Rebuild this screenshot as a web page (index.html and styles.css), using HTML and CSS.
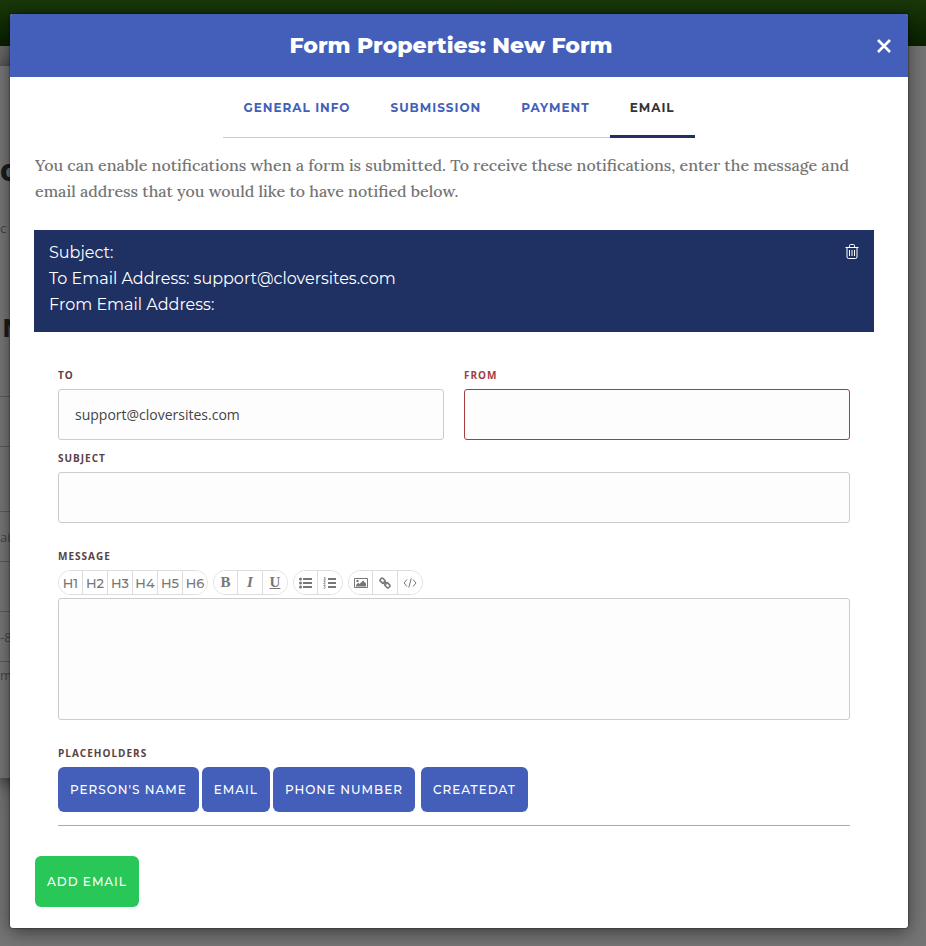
FILE: index.html
```html
<!DOCTYPE html>
<html lang="en">
<head>
  <meta charset="UTF-8">
  <meta name="viewport" content="width=device-width, initial-scale=1.0">
  <title>Form Properties</title>
  <link rel="stylesheet" href="styles.css">
</head>
<body>

<!-- Page behind the modal -->
<div class="page" aria-hidden="true">
  <div class="page-header"></div>
  <div class="page-toolbar"></div>
  <div class="page-card">
    <div class="page-title">o</div>
    <div class="page-text">c</div>
    <div class="page-heading">N</div>
    <div class="page-row"></div>
    <div class="page-row gap"></div>
    <div class="page-row">ai</div>
    <div class="page-row"></div>
    <div class="page-row">-8</div>
    <div class="page-row last">m</div>
  </div>
</div>

<!-- Modal -->
<div class="overlay">
  <div class="modal" role="dialog" aria-labelledby="modalTitle">
    <div class="modal-header">
      <h1 id="modalTitle">Form Properties: New Form</h1>
      <button type="button" class="close-button" aria-label="Close">
        <svg width="16" height="16" viewBox="0 0 16 16"><path d="M2 2l12 12M14 2L2 14" stroke="#fff" stroke-width="2.600" fill="none"/></svg>
      </button>
    </div>

    <div class="modal-body">
      <nav class="tabs">
        <a href="#general">General Info</a>
        <a href="#submission">Submission</a>
        <a href="#payment">Payment</a>
        <a href="#email" class="active">Email</a>
      </nav>

      <div class="content">
        <p class="intro">You can enable notifications when a form is submitted. To receive these notifications, enter the message and email address that you would like to have notified below.</p>

        <div class="summary">
          <div>
            <div>Subject:</div>
            <div>To Email Address: support@cloversites.com</div>
            <div>From Email Address:</div>
          </div>
          <button type="button" class="delete-button" aria-label="Delete">
            <svg width="14" height="15" viewBox="0 0 14 15" fill="none" stroke="#fff"><path d="M0.5 3.5h13M4.5 3V1.5q0-1 1-1h3q1 0 1 1V3M2 4v9q0 1.500 1.500 1.500h7q1.500 0 1.500-1.500V4M4.500 6v6M7 6v6M9.500 6v6"/></svg>
          </button>
        </div>

        <form class="email-form">
          <div class="row">
            <div class="field">
              <label for="to">To</label>
              <input type="text" id="to" value="support@cloversites.com">
            </div>
            <div class="field error">
              <label for="from">From</label>
              <input type="text" id="from">
            </div>
          </div>

          <div class="field subject">
            <label for="subject">Subject</label>
            <input type="text" id="subject">
          </div>

          <div class="field message">
            <label for="message">Message</label>
            <div class="toolbar">
              <div class="group">
                <button type="button">H1</button>
                <button type="button">H2</button>
                <button type="button">H3</button>
                <button type="button">H4</button>
                <button type="button">H5</button>
                <button type="button">H6</button>
              </div>
              <div class="group serif">
                <button type="button"><b>B</b></button>
                <button type="button"><i>I</i></button>
                <button type="button"><u>U</u></button>
              </div>
              <div class="group">
                <button type="button" aria-label="Bulleted list">
                  <svg width="14" height="12" viewBox="0 0 14 12" fill="#777"><circle cx="1.500" cy="2" r="1.500"/><circle cx="1.500" cy="6" r="1.500"/><circle cx="1.500" cy="10" r="1.500"/><path d="M4 1h9v2H4zM4 5h9v2H4zM4 9h9v2H4z"/></svg>
                </button>
                <button type="button" aria-label="Numbered list">
                  <svg width="14" height="12" viewBox="0 0 14 12" fill="#777"><path d="M5 1h8v2H5zM5 5h8v2H5zM5 9h8v2H5z"/><path d="M1 .5h1V3M.7 3.200h1.800M.6 4.700q1.800-.6 1.600.4L.7 6.900h1.800M.6 8.500h1.700L1.500 9.600q1 .2.700 1.200-.6.900-1.700.3" fill="none" stroke="#777" stroke-width=".8"/></svg>
                </button>
              </div>
              <div class="group">
                <button type="button" aria-label="Image">
                  <svg width="14" height="12" viewBox="0 0 14 12" fill="#777"><path d="M.5 1.500h13v9H.5z" fill="none" stroke="#777"/><circle cx="3.500" cy="4" r="1.200"/><path d="M2 9.500V8l2.300-2.200L5.500 7 9 3.500 12 6.500v3z"/></svg>
                </button>
                <button type="button" aria-label="Link">
                  <svg width="12" height="12" viewBox="0 0 12 12" fill="none" stroke="#777" stroke-width="1.600"><rect x="1" y="1.800" width="5.200" height="3.800" rx="1.700" transform="rotate(45 3.600 3.700)"/><rect x="5.800" y="6.400" width="5.200" height="3.800" rx="1.700" transform="rotate(45 8.400 8.300)"/><path d="M4.500 4.500l3 3"/></svg>
                </button>
                <button type="button" aria-label="Code">
                  <svg width="14" height="10" viewBox="0 0 14 10" fill="none" stroke="#777"><path d="M4 1.500L1 5l3 3.500M10 1.500L13 5l-3 3.500M8.200.5L5.800 9.500"/></svg>
                </button>
              </div>
            </div>
            <textarea id="message"></textarea>
          </div>

          <div class="field placeholders">
            <span class="label">Placeholders</span>
            <div class="placeholder-buttons">
              <button type="button">Person's Name</button>
              <button type="button">Email</button>
              <button type="button">Phone Number</button>
              <button type="button" class="created">CreatedAt</button>
            </div>
          </div>
        </form>

        <button type="button" class="add-button">Add Email</button>
      </div>
    </div>
  </div>
</div>

</body>
</html>
```
FILE: styles.css
```css
* {
  box-sizing: border-box;
}

body {
  margin: 0;
  background-color: #757575;
  font-family: Montserrat, Inter, sans-serif;
}

button {
  font-family: inherit;
  cursor: pointer;
}

/* Page behind the modal */
.page {
  position: absolute;
  inset: 0;
  overflow: hidden;
  color: #454545;
  font: 13px/20px "Open Sans", sans-serif;
}

.page-header {
  height: 46px;
  background: linear-gradient(#193809, #0a2000);
}

.page-toolbar {
  width: 300px;
  height: 20px;
  background-color: #6b6b6b;
}

.page-card {
  width: 300px;
  height: 712px;
  background-color: #777;
  box-shadow: 0 2px 20px rgba(0, 0, 0, 0.8);
}

.page-title {
  padding-top: 84px;
  font: 800 30px/40px Inter, sans-serif;
  color: #1c1c1c;
}

.page-text {
  padding-top: 28px;
}

.page-heading {
  padding: 74px 0 50px 3px;
  font: 800 24px/34px Inter, sans-serif;
  color: #1c1c1c;
}

.page-row {
  height: 50px;
  padding-top: 15px;
  border-top: 1px solid #5c5c5c;
}

.page-row.gap {
  height: 65px;
}

.page-row.last {
  padding-top: 3px;
}

/* Modal */
.overlay {
  position: relative;
  padding: 14px 18px 18px 10px;
}

.modal {
  background-color: #fff;
  border-radius: 3px;
  box-shadow: 0 0 2px rgba(0, 0, 0, 0.8), 0 4px 18px rgba(0, 0, 0, 0.5);
}

.modal-header {
  display: flex;
  align-items: center;
  height: 63px;
  padding: 0 16px;
  background-color: #445fb9;
  border-radius: 3px 3px 0 0;
}

.modal-header h1 {
  flex: 1;
  margin: 0;
  color: #fff;
  font-size: 22px;
  line-height: 30px;
  font-weight: 800;
  text-align: center;
}

.close-button {
  display: flex;
  padding: 0;
  border: none;
  background: none;
}

.modal-body {
  padding: 0 24px 21px;
}

.content {
  padding-right: 10px;
}

.tabs {
  display: flex;
  width: fit-content;
  margin: 0 auto;
  border-bottom: 1px solid #ccc;
}

.tabs a {
  padding: 21px 20px 0;
  margin-bottom: -1px;
  height: 61px;
  color: #445fb9;
  font-size: 12px;
  line-height: 20px;
  font-weight: 700;
  letter-spacing: 1px;
  text-transform: uppercase;
  text-decoration: none;
}

.tabs a.active {
  color: #333;
  border-bottom: 3px solid #1f3063;
}

.intro {
  margin: 14px 0 26px;
  padding-left: 1px;
  color: #757575;
  font-family: Lora, "Liberation Serif", serif;
  font-size: 16px;
  line-height: 26px;
  font-weight: 500;
}

.summary {
  display: flex;
  justify-content: space-between;
  align-items: flex-start;
  padding: 10px 15px 14px;
  background-color: #1f3063;
  color: #fff;
  font-size: 16px;
  line-height: 26px;
}

.delete-button {
  display: flex;
  padding: 4px 0 0;
  border: none;
  background: none;
}

.email-form {
  margin: 36px 24px 30px;
  padding-bottom: 13px;
  border-bottom: 1px solid #aaa;
}

.row {
  display: grid;
  grid-template-columns: 1fr 1fr;
  gap: 20px;
}

.field label,
.field .label {
  display: block;
  margin-bottom: 7px;
  color: #5b4242;
  font-family: "Open Sans", sans-serif;
  font-size: 10px;
  line-height: 14px;
  font-weight: 700;
  letter-spacing: 1px;
  text-transform: uppercase;
}

.field input,
.field textarea {
  display: block;
  width: 100%;
  padding: 0 16px;
  border: 1px solid #ccc;
  border-radius: 3px;
  background-color: #fdfdfd;
  color: #444;
  font-family: "Open Sans", sans-serif;
  font-size: 14px;
}

.field input {
  height: 51px;
}

.field textarea {
  height: 122px;
  padding: 12px 16px;
  resize: none;
}

.field.error label {
  color: #a33d42;
}

.field.error input {
  border-color: #a33d42;
}

.subject {
  margin-top: 11px;
}

.message {
  margin-top: 26px;
}

/* Editor toolbar */
.toolbar {
  display: flex;
  gap: 5px;
  margin-bottom: 3px;
}

.group {
  display: flex;
  height: 25px;
  border: 1px solid #ddd;
  border-radius: 13px;
  overflow: hidden;
}

.group button {
  display: flex;
  align-items: center;
  justify-content: center;
  width: 25px;
  padding: 0;
  border: none;
  background: #fff;
  color: #777;
  font-size: 13px;
  font-weight: 500;
}

.group button:first-child {
  width: 23px;
}

.group button + button {
  border-left: 1px solid #ddd;
}

.serif button {
  font-family: "Liberation Serif", serif;
  font-size: 15px;
  font-weight: 700;
}

/* Placeholders */
.placeholders {
  margin-top: 26px;
}

.placeholder-buttons {
  display: flex;
  gap: 3px;
}

.placeholder-buttons button,
.add-button {
  height: 45px;
  padding: 0 12px;
  border: none;
  border-radius: 6px;
  background-color: #445fb9;
  color: #fff;
  font-size: 12px;
  font-weight: 500;
  letter-spacing: 1px;
  text-transform: uppercase;
}

.placeholder-buttons .created {
  margin-left: 3px;
}

.add-button {
  display: block;
  height: 51px;
  margin-left: 1px;
  background-color: #28c758;
}
```
